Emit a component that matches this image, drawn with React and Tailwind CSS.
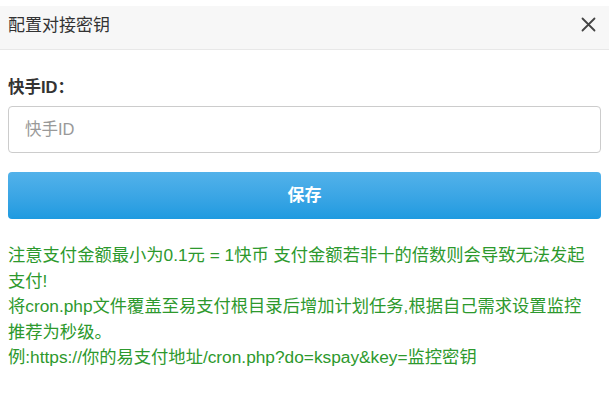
import React from 'react';

export default function App() {
    return (
        <div className="w-[609px] h-[404px] bg-white pt-[6px] font-['Liberation_Sans','Noto_Sans_CJK_SC',sans-serif]">
            {/* Header */}
            <div className="h-[44px] bg-[#f7f7f7] border-b border-[#e8e8e8] flex items-center justify-between pl-2 pr-[13px] pb-[3px]">
                <span className="text-[17px] text-[#333]">配置对接密钥</span>
                <svg width="15" height="15" viewBox="0 0 15 15" className="mb-[3px]">
                    <path d="M1.5 1.5 L13.5 13.5 M13.5 1.5 L1.5 13.5" stroke="#444" strokeWidth="1.8" strokeLinecap="round" />
                </svg>
            </div>

            {/* Body */}
            <div className="px-2 pt-[25px]">
                <label className="block text-[16.5px] font-bold text-[#333] leading-[24px]">快手ID：</label>
                <input
                    className="mt-[7px] w-full h-[47px] rounded-[4px] border border-[#ccc] px-[16px] text-[16.5px] text-[#555] placeholder:text-[#999] outline-none"
                    placeholder="快手ID"
                />
                <button className="mt-[19px] w-full h-[47px] rounded-[4px] bg-gradient-to-b from-[#52b2ea] to-[#1d9ae0] text-white text-[17px] font-semibold">
                    保存
                </button>

                <div className="mt-[24px] text-[17.3px] leading-[25.5px] text-[#2d992d] whitespace-nowrap">
                    <div>注意支付金额最小为0.1元 = 1快币 支付金额若非十的倍数则会导致无法发起</div>
                    <div>支付!</div>
                    <div>将cron.php文件覆盖至易支付根目录后增加计划任务,根据自己需求设置监控</div>
                    <div>推荐为秒级。</div>
                    <div>例:https://你的易支付地址/cron.php?do=kspay&amp;key=监控密钥</div>
                </div>
            </div>
        </div>
    );
}
